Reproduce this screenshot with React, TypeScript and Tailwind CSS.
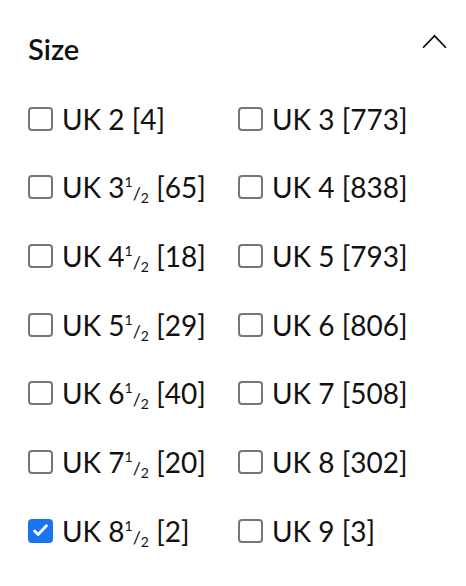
import React from "react";

type Size = { whole: string; half?: boolean; count: number; checked?: boolean };

const sizes: Size[] = [
  { whole: "2", count: 4 },
  { whole: "3", count: 773 },
  { whole: "3", half: true, count: 65 },
  { whole: "4", count: 838 },
  { whole: "4", half: true, count: 18 },
  { whole: "5", count: 793 },
  { whole: "5", half: true, count: 29 },
  { whole: "6", count: 806 },
  { whole: "6", half: true, count: 40 },
  { whole: "7", count: 508 },
  { whole: "7", half: true, count: 20 },
  { whole: "8", count: 302 },
  { whole: "8", half: true, count: 2, checked: true },
  { whole: "9", count: 3 },
];

function Box({ checked }: { checked?: boolean }) {
  if (checked) {
    return (
      <span className="flex h-[24px] w-[25px] shrink-0 items-center justify-center rounded-[4px] bg-[#1a73f0]">
        <svg viewBox="0 0 24 24" className="h-[19px] w-[19px]" fill="none">
          <path d="M4.5 12.5l4.5 4.5 10.5-11" stroke="#fff" strokeWidth="3.6" strokeLinecap="round" strokeLinejoin="round" />
        </svg>
      </span>
    );
  }
  return <span className="h-[24px] w-[25px] shrink-0 rounded-[4px] border-2 border-[#767676] bg-white" />;
}

function Label({ s }: { s: Size }) {
  return (
    <span className="whitespace-nowrap text-[28px] leading-none text-[#111]">
      UK {s.whole}
      {s.half && (
        <>
          <span className="relative -top-[11px] text-[14px]">1</span>
          <span className="relative top-[2px] text-[18px]">/</span>
          <span className="relative top-[5px] text-[14px]">2</span>
        </>
      )}{" "}
      [{s.count}]
    </span>
  );
}

export default function App() {
  return (
    <div className="min-h-[586px] w-[466px] bg-white px-[28px] pt-[33px] font-['Lato','Open_Sans',sans-serif]">
      <div className="flex h-[32px] items-center justify-between">
        <h3 className="text-[29px] font-semibold leading-[32px] text-[#111]">Size</h3>
        <svg viewBox="0 0 24 14" className="mr-[-9px] mt-[-16px] h-[15px] w-[25px]" fill="none">
          <path d="M1 13L12 1.5 23 13" stroke="#111" strokeWidth="1.7" />
        </svg>
      </div>
      <div className="mt-[41px] grid grid-cols-[210px_1fr] gap-y-[43.7px]">
        {sizes.map((s, i) => (
          <label key={i} className="flex h-[25px] items-center gap-[9px]">
            <Box checked={s.checked} />
            <Label s={s} />
          </label>
        ))}
      </div>
    </div>
  );
}
